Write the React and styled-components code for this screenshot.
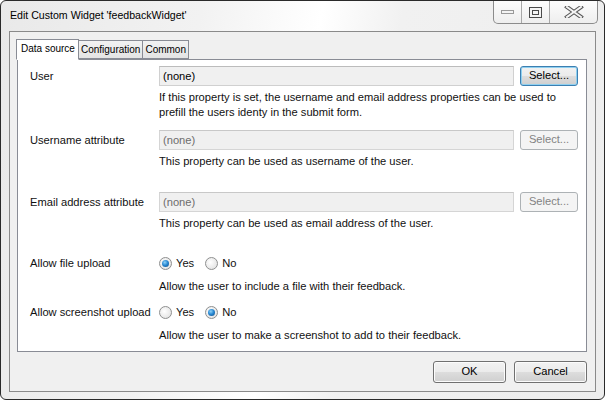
import styled, { createGlobalStyle, css } from "styled-components";

const Global = createGlobalStyle`
  body {
    margin: 0;
    background: #ffffff;
    font-family: "Liberation Sans", Arial, sans-serif;
    font-size: 11.15px;
    color: #000;
  }
`;

const Window = styled.div`
  box-sizing: border-box;
  width: 605px;
  height: 400px;
  display: flex;
  flex-direction: column;
  border: 1px solid #2a2a2a;
  border-radius: 6px;
  padding: 0 8px 7px 8px;
  background: linear-gradient(100deg, #e9e9e9 0%, #f2f2f2 30%, #ffffff 48%, #f1f1f1 60%, #ededed 100%);
`;

const TitleBar = styled.div`
  height: 30px;
  display: flex;
  align-items: flex-start;
  justify-content: space-between;
`;

const Title = styled.div`
  padding: 8px 0 0 1px;
  font-size: 10.6px;
  color: #000;
`;

const Caption = styled.div`
  display: flex;
  height: 22px;
  margin-right: -2px;
  border: 1px solid #8c8c8c;
  border-top: none;
  border-radius: 0 0 5px 5px;
  background: linear-gradient(#fdfdfd, #eeeeee);
  overflow: hidden;
`;

const CapBtn = styled.div`
  width: ${(p) => p.w}px;
  display: flex;
  align-items: center;
  justify-content: center;
  & + & {
    border-left: 1px solid #a8a8a8;
  }
`;

const Client = styled.div`
  flex: 1;
  display: flex;
  flex-direction: column;
  border: 1px solid #8a8a8a;
  background: #f0f0f0;
  padding: 7px 8px 8px 6px;
`;

const TabStrip = styled.div`
  display: flex;
  align-items: flex-end;
  height: 21px;
  position: relative;
  z-index: 1;
`;

const Tab = styled.div`
  box-sizing: border-box;
  border: 1px solid #898c95;
  font-size: 10px;
  color: #000;
  ${(p) =>
    p.$active
      ? css`
          height: 21px;
          line-height: 17px;
          background: #fff;
          border-bottom-color: #fff;
          padding: 0 3px 0 4px;
        `
      : css`
          height: 19px;
          line-height: 18px;
          margin-bottom: 1px;
          padding: 0 2px;
          background: linear-gradient(#f2f2f2, #e4e4e4);
          & + & {
            margin-left: -1px;
          }
        `}
`;

const Panel = styled.div`
  flex: 1;
  margin-left: 1px;
  margin-top: -1px;
  background: #fff;
  border: 1px solid #898c95;
  padding: 6px 8px 0 12px;
`;

const Field = styled.div`
  display: grid;
  grid-template-columns: 129px 1fr;
  margin-top: ${(p) => p.$top || 0}px;
`;

const Label = styled.div`
  height: 20px;
  line-height: 20px;
  color: #111;
`;

const ControlRow = styled.div`
  display: flex;
  align-items: center;
  height: 20px;
`;

const Input = styled.div`
  box-sizing: border-box;
  width: 355px;
  height: 20px;
  line-height: 18px;
  padding: 0 3px;
  border: 1px solid ${(p) => (p.$disabled ? "#d5d5d5" : "#d0d0d0")};
  border-top-color: ${(p) => (p.$disabled ? "#c8c8c8" : "#bcbcbc")};
  background: #f0f0f0;
  color: ${(p) => (p.$disabled ? "#6d6d6d" : "#000")};
`;

const SmallButton = styled.div`
  box-sizing: border-box;
  width: 58px;
  height: 20px;
  margin-left: 6px;
  border-radius: 3px;
  text-align: center;
  line-height: 17px;
  ${(p) =>
    p.$disabled
      ? css`
          border: 1px solid #adb2b5;
          background: #f4f4f4;
          color: #838383;
        `
      : css`
          border: 1px solid #3c7fb1;
          background: linear-gradient(#f2f2f2 0%, #ebebeb 50%, #dddddd 51%, #cfcfcf 100%);
          box-shadow: inset 0 0 0 1px #8fd0f0;
          color: #000;
        `}
`;

const Desc = styled.div`
  margin-top: ${(p) => p.$top || 4}px;
  line-height: 15px;
  color: #111;
`;

const RadioGroup = styled.div`
  display: flex;
  align-items: center;
`;

const RadioOption = styled.label`
  display: flex;
  align-items: center;
  margin-right: 11px;
  color: #111;
`;

const RadioDot = styled.span`
  box-sizing: border-box;
  width: 13px;
  height: 13px;
  margin-right: 4px;
  border-radius: 50%;
  border: 1px solid #8e8f8f;
  background: radial-gradient(circle at 40% 40%, #ffffff, #dcdcdc);
  display: flex;
  align-items: center;
  justify-content: center;
  &::after {
    content: "";
    display: ${(p) => (p.$checked ? "block" : "none")};
    width: 7px;
    height: 7px;
    border-radius: 50%;
    background: radial-gradient(circle at 40% 35%, #8fd2f7 0%, #2a8ad4 45%, #0e4a82 100%);
  }
`;

const Footer = styled.div`
  display: flex;
  justify-content: flex-end;
  gap: 8px;
  padding-top: 9px;
`;

const Button = styled.div`
  box-sizing: border-box;
  width: 73px;
  height: 22px;
  border: 1px solid #707070;
  border-radius: 3px;
  background: linear-gradient(#f2f2f2 0%, #ebebeb 50%, #dddddd 51%, #cfcfcf 100%);
  box-shadow: inset 0 0 0 1px #fcfcfc;
  text-align: center;
  line-height: 19px;
  color: #000;
`;

function Radio({ label, checked }) {
  return (
    <RadioOption>
      <RadioDot $checked={checked} />
      {label}
    </RadioOption>
  );
}

function MinIcon() {
  return (
    <svg width="14" height="6" viewBox="0 0 14 6">
      <rect x="0.5" y="1.5" width="12" height="3" fill="#f4f4f4" stroke="#9a9a9a" />
    </svg>
  );
}

function MaxIcon() {
  return (
    <svg width="13" height="11" viewBox="0 0 13 11">
      <rect x="0.5" y="0.5" width="12" height="10" fill="#f4f4f4" stroke="#4a4a4a" />
      <rect x="3.5" y="3.5" width="6" height="4" fill="none" stroke="#4a4a4a" />
    </svg>
  );
}

function CloseIcon() {
  return (
    <svg width="20" height="12" viewBox="0 0 20 12">
      <path d="M3 1 L17 11 M17 1 L3 11" stroke="#5a5a5a" strokeWidth="4" strokeLinecap="square" />
      <path d="M3 1 L17 11 M17 1 L3 11" stroke="#f4f4f4" strokeWidth="2" strokeLinecap="square" />
    </svg>
  );
}

export default function App() {
  return (
    <>
      <Global />
      <Window>
        <TitleBar>
          <Title>Edit Custom Widget 'feedbackWidget'</Title>
          <Caption>
            <CapBtn w={27}>
              <MinIcon />
            </CapBtn>
            <CapBtn w={27}>
              <MaxIcon />
            </CapBtn>
            <CapBtn w={47}>
              <CloseIcon />
            </CapBtn>
          </Caption>
        </TitleBar>
        <Client>
          <TabStrip>
            <Tab $active>Data source</Tab>
            <Tab>Configuration</Tab>
            <Tab>Common</Tab>
          </TabStrip>
          <Panel>
            <Field>
              <Label>User</Label>
              <div>
                <ControlRow>
                  <Input>(none)</Input>
                  <SmallButton>Select...</SmallButton>
                </ControlRow>
                <Desc>
                  If this property is set, the username and email address properties can be used to
                  <br />
                  prefill the users identy in the submit form.
                </Desc>
              </div>
            </Field>
            <Field $top={10}>
              <Label>Username attribute</Label>
              <div>
                <ControlRow>
                  <Input $disabled>(none)</Input>
                  <SmallButton $disabled>Select...</SmallButton>
                </ControlRow>
                <Desc $top={4}>This property can be used as username of the user.</Desc>
              </div>
            </Field>
            <Field $top={23}>
              <Label>Email address attribute</Label>
              <div>
                <ControlRow>
                  <Input $disabled>(none)</Input>
                  <SmallButton $disabled>Select...</SmallButton>
                </ControlRow>
                <Desc $top={4}>This property can be used as email address of the user.</Desc>
              </div>
            </Field>
            <Field $top={22}>
              <Label>Allow file upload</Label>
              <div>
                <ControlRow>
                  <RadioGroup>
                    <Radio label="Yes" checked />
                    <Radio label="No" />
                  </RadioGroup>
                </ControlRow>
                <Desc $top={6}>Allow the user to include a file with their feedback.</Desc>
              </div>
            </Field>
            <Field $top={8}>
              <Label>Allow screenshot upload</Label>
              <div>
                <ControlRow>
                  <RadioGroup>
                    <Radio label="Yes" />
                    <Radio label="No" checked />
                  </RadioGroup>
                </ControlRow>
                <Desc $top={6}>Allow the user to make a screenshot to add to their feedback.</Desc>
              </div>
            </Field>
          </Panel>
          <Footer>
            <Button>OK</Button>
            <Button>Cancel</Button>
          </Footer>
        </Client>
      </Window>
    </>
  );
}
